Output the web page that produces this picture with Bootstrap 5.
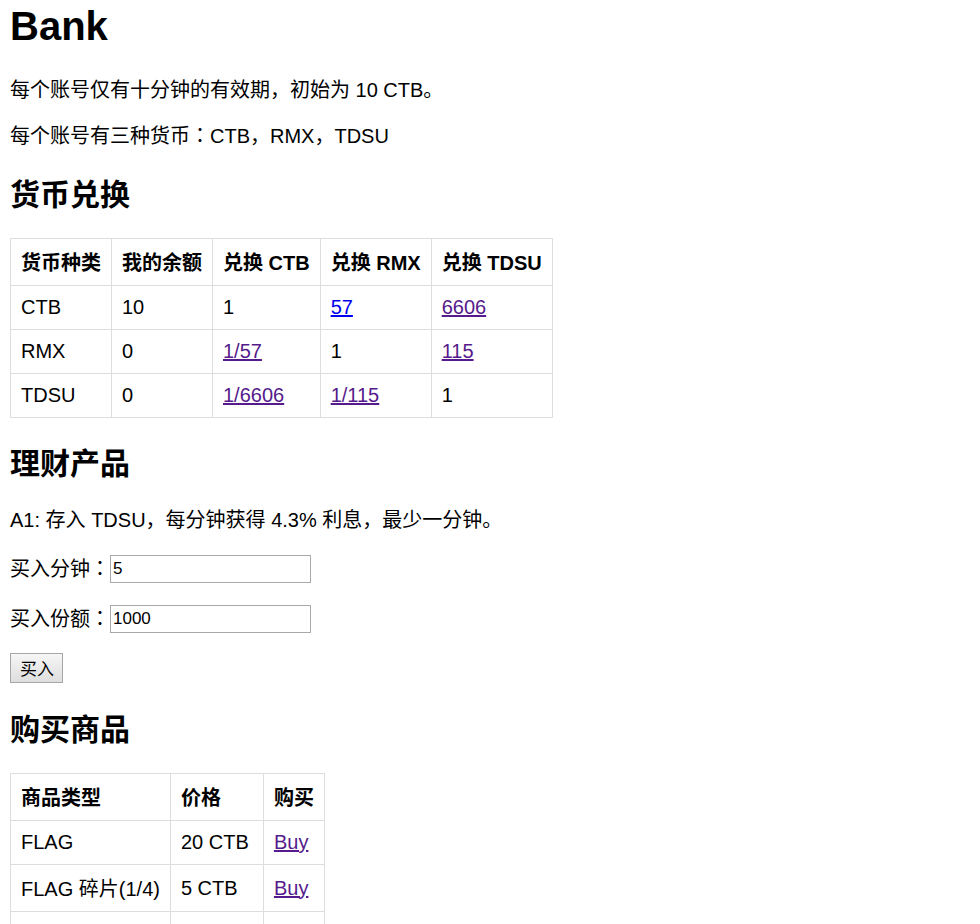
<!DOCTYPE html>
<html lang="zh-CN">
<head>
<meta charset="utf-8">
<meta name="viewport" content="width=device-width, initial-scale=1">
<title>Bank</title>
<link href="https://cdn.jsdelivr.net/npm/bootstrap@5.3.0/dist/css/bootstrap.min.css" rel="stylesheet">
<style>
html { overflow: hidden; }
body { font-family: "Liberation Sans", "Noto Sans CJK SC", sans-serif; font-size: 20px; line-height: 26px; color: #000; padding: 0 10px; }
h1, h2 { font-weight: 700; margin: 0; }
h1 { font-size: 40px; line-height: 52px; margin-bottom: 25px; }
h2 { font-size: 30px; line-height: 40px; margin: 26px 0 23px; }
p { margin: 0 0 20px; }
.bank-table { width: auto; margin: 0; border-collapse: collapse; color: #000; }
.bank-table th, .bank-table td { border: 1px solid #ddd; padding: 10px; line-height: 23px; white-space: nowrap; }
.bank-table th, .bank-table .cjk-cell { line-height: 26px; padding: 11px 10px 9px; }
.bank-table .price { min-width: 93px; }
a { color: #551a8b; text-decoration: underline; }
a.fresh { color: #0000ee; }
form { margin-bottom: 27px; }
.wide-colon { font-family: "Noto Sans CJK JP", sans-serif; line-height: 1; }
.field { height: 30px; margin-bottom: 20px; }
.field label { line-height: 28px; }
.field input { width: 201px; height: 28px; font-size: 17px; line-height: 20px; padding: 2px; border: 1px solid #a9a9a9; border-radius: 0; color: #000; }
.buy-button { font-size: 17px; line-height: 24px; padding: 4px 8px 0 9px; border: 1px solid #a6a6a6; border-radius: 0; color: #000; background: linear-gradient(#f6f6f6, #dedede); }
</style>
<script src="https://cdn.jsdelivr.net/npm/bootstrap@5.3.0/dist/js/bootstrap.bundle.min.js" defer></script>
</head>
<body>
<main>
<h1>Bank</h1>
<p>每个账号仅有十分钟的有效期，初始为 10 CTB。</p>
<p>每个账号有三种货币<span class="wide-colon" lang="ja">：</span>CTB，RMX，TDSU</p>
<h2>货币兑换</h2>
<table class="bank-table">
<thead><tr><th>货币种类</th><th>我的余额</th><th>兑换 CTB</th><th>兑换 RMX</th><th>兑换 TDSU</th></tr></thead>
<tbody>
<tr><td>CTB</td><td>10</td><td>1</td><td><a class="fresh" href="#rmx">57</a></td><td><a href="#tdsu">6606</a></td></tr>
<tr><td>RMX</td><td>0</td><td><a href="#ctb">1/57</a></td><td>1</td><td><a href="#tdsu">115</a></td></tr>
<tr><td>TDSU</td><td>0</td><td><a href="#ctb">1/6606</a></td><td><a href="#rmx">1/115</a></td><td>1</td></tr>
</tbody>
</table>
<h2>理财产品</h2>
<form>
<p>A1: 存入 TDSU，每分钟获得 4.3% 利息，最少一分钟。</p>
<div class="field d-flex align-items-end"><label for="minutes">买入分钟<span class="wide-colon" lang="ja">：</span></label><input id="minutes" type="text" value="5"></div>
<div class="field d-flex align-items-end"><label for="amount">买入份额<span class="wide-colon" lang="ja">：</span></label><input id="amount" type="text" value="1000"></div>
<button class="buy-button d-block" type="button">买入</button>
</form>
<h2>购买商品</h2>
<table class="bank-table">
<thead><tr><th>商品类型</th><th class="price">价格</th><th>购买</th></tr></thead>
<tbody>
<tr><td>FLAG</td><td>20 CTB</td><td><a href="#flag">Buy</a></td></tr>
<tr><td class="cjk-cell">FLAG 碎片(1/4)</td><td>5 CTB</td><td><a href="#piece">Buy</a></td></tr>
<tr><td>&nbsp;</td><td></td><td></td></tr>
</tbody>
</table>
</main>
</body>
</html>
